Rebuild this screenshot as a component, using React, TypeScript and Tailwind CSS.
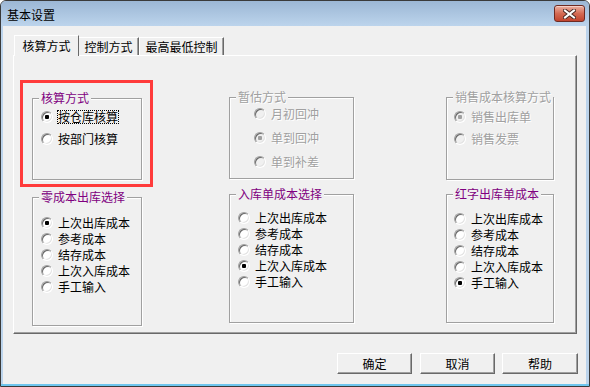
import React from "react";

type Opt = { label: string; checked?: boolean; focus?: boolean };

function Radio({ checked, disabled }: { checked?: boolean; disabled?: boolean }) {
  return (
    <span
      className={`flex h-3 w-3 shrink-0 items-center justify-center rounded-full border border-t-[#a0a0a0] border-l-[#a0a0a0] border-r-white border-b-white shadow-[inset_1px_1px_0_#696969,inset_-1px_-1px_0_#e3e3e3] ${
        disabled ? "bg-[#f0f0f0]" : "bg-white"
      }`}
    >
      {checked && (
        <span className={`h-1 w-1 rounded-[1px] ${disabled ? "bg-[#a0a0a0]" : "bg-black"}`} />
      )}
    </span>
  );
}

function GroupBox({
  title,
  options,
  disabled,
  className,
  rowClass,
}: {
  title: string;
  options: Opt[];
  disabled?: boolean;
  className: string;
  rowClass: string;
}) {
  return (
    <div
      className={`relative border border-[#a0a0a0] shadow-[inset_1px_1px_0_#fff,1px_1px_0_#fff] ${className}`}
    >
      <span
        className={`absolute -top-[7px] left-[6px] whitespace-nowrap bg-[#f0f0f0] px-[2px] leading-[12px] ${
          disabled ? "text-[#a0a0a0] [text-shadow:1px_1px_0_#fff]" : "text-[#800080]"
        }`}
      >
        {title}
      </span>
      {options.map((o) => (
        <div key={o.label} className={`flex items-center gap-[5px] ${rowClass}`}>
          <Radio checked={o.checked} disabled={disabled} />
          <span
            className={`whitespace-nowrap leading-[12px] ${
              disabled ? "text-[#a0a0a0] [text-shadow:1px_1px_0_#fff]" : "text-black"
            } ${o.focus ? "-mx-px border border-dotted border-black" : ""}`}
          >
            {o.label}
          </span>
        </div>
      ))}
    </div>
  );
}

const costOptions = ["上次出库成本", "参考成本", "结存成本", "上次入库成本", "手工输入"];

function costList(checked: number): Opt[] {
  return costOptions.map((label, i) => ({ label, checked: i === checked }));
}

function Button({ label, className }: { label: string; className: string }) {
  return (
    <button
      className={`flex h-[21px] items-center justify-center border border-t-white border-l-white border-r-[#696969] border-b-[#696969] bg-[#f0f0f0] leading-[12px] text-black shadow-[inset_-1px_-1px_0_#a0a0a0] ${className}`}
    >
      {label}
    </button>
  );
}

export default function App() {
  return (
    <div className="flex h-[387px] w-[590px] flex-col overflow-hidden rounded-t-[6px] border border-[#3a3a3a] bg-[#bcd4ec] font-['Noto_Sans_CJK_SC',sans-serif] text-[12px]">
      {/* title bar */}
      <div className="flex h-[25px] shrink-0 items-start justify-between bg-gradient-to-b from-[#9cb7d5] to-[#bcd4ec] pl-[6px] pr-[4px] pt-[4px]">
        <span className="mt-[4px] leading-[12px] text-black">基本设置</span>
        <div className="flex h-[17px] w-[31px] items-center justify-center rounded-[3px] border border-[#6e2a22] bg-gradient-to-b from-[#eab0a2] via-[#d46a53] to-[#c1432d] shadow-[inset_0_1px_0_#f6cfc6]">
          <svg width="13" height="10" viewBox="0 0 13 10">
            <path d="M2 1.5 L11 8.5 M11 1.5 L2 8.5" stroke="#4a2a26" strokeWidth="4" strokeLinecap="square" />
            <path d="M2 1.5 L11 8.5 M11 1.5 L2 8.5" stroke="#ffffff" strokeWidth="2" strokeLinecap="square" />
          </svg>
        </div>
      </div>

      {/* client */}
      <div className="flex flex-1">
        <div className="ml-[2px] mr-[3px] flex flex-1 flex-col bg-[#f0f0f0]">
          {/* tabs */}
          <div className="flex h-[29px] items-end pl-[11px] pt-[9px]">
            <div className="relative z-10 -mb-px flex h-[21px] w-[65px] items-center justify-center border border-b-0 border-t-white border-l-white border-r-[#696969] bg-[#f0f0f0] leading-[12px] text-black">
              核算方式
            </div>
            <div className="flex h-[18px] w-[60px] items-center justify-center border border-b-0 border-l-0 border-t-white border-r-[#696969] leading-[12px] text-black shadow-[inset_-1px_0_0_#a0a0a0]">
              控制方式
            </div>
            <div className="flex h-[18px] w-[85px] items-center justify-center border border-b-0 border-t-white border-l-white border-r-[#696969] leading-[12px] text-black shadow-[inset_-1px_0_0_#a0a0a0]">
              最高最低控制
            </div>
          </div>

          {/* panel */}
          <div className="relative ml-[10px] mr-[9px] flex h-[279px] border border-t-white border-l-white border-r-[#696969] border-b-[#696969] shadow-[inset_-1px_-1px_0_#a0a0a0]">
            <div className="ml-[18px] mt-[42px] flex w-[110px] flex-col">
              <GroupBox
                title="核算方式"
                className="h-[82px] pl-[8px] pt-[7px]"
                rowClass="h-[22px]"
                options={[
                  { label: "按仓库核算", checked: true, focus: true },
                  { label: "按部门核算" },
                ]}
              />
              <GroupBox
                title="零成本出库选择"
                className="mt-[17px] h-[129px] pl-[8px] pt-[17px]"
                rowClass="h-[16px]"
                options={costList(0)}
              />
            </div>

            <div className="ml-[87px] mt-[41px] flex w-[125px] flex-col">
              <GroupBox
                title="暂估方式"
                disabled
                className="h-[82px] pl-[24px] pt-[4px]"
                rowClass="h-[24px]"
                options={[
                  { label: "月初回冲" },
                  { label: "单到回冲", checked: true },
                  { label: "单到补差" },
                ]}
              />
              <GroupBox
                title="入库单成本选择"
                className="mt-[15px] h-[129px] pl-[8px] pt-[15px]"
                rowClass="h-[16px]"
                options={costList(3)}
              />
            </div>

            <div className="ml-[92px] mt-[41px] flex w-[108px] flex-col">
              <GroupBox
                title="销售成本核算方式"
                disabled
                className="h-[83px] pl-[7px] pt-[8px]"
                rowClass="h-[22px]"
                options={[{ label: "销售出库单", checked: true }, { label: "销售发票" }]}
              />
              <GroupBox
                title="红字出库单成本"
                className="mt-[14px] h-[129px] pl-[7px] pt-[16px]"
                rowClass="h-[16px]"
                options={costList(4)}
              />
            </div>

            {/* annotation */}
            <div className="pointer-events-none absolute left-[6px] top-[24px] h-[107px] w-[133px] border-[3px] border-[#ff3b3b]" />
          </div>

          {/* buttons */}
          <div className="mt-[19px] flex justify-end pr-[8px]">
            <Button label="确定" className="w-[75px]" />
            <Button label="取消" className="ml-[8px] w-[75px]" />
            <Button label="帮助" className="ml-[7px] w-[76px]" />
          </div>
        </div>
      </div>
      <div className="h-[2px] shrink-0 bg-[#6fc6ee]" />
    </div>
  );
}
